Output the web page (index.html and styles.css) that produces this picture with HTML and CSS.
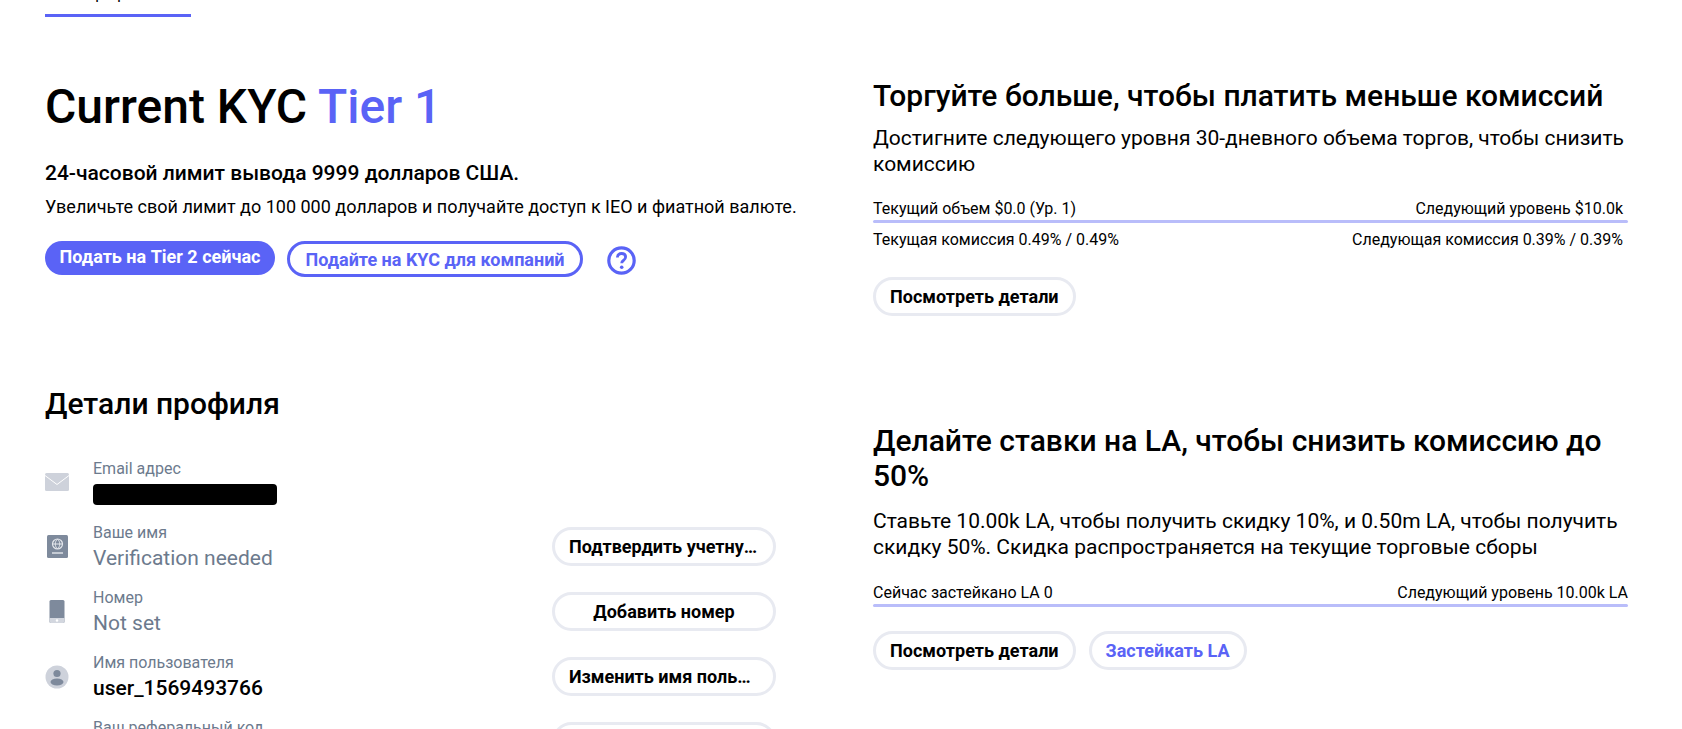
FILE: index.html
```html
<!DOCTYPE html>
<html lang="ru">
<head>
  <meta charset="UTF-8" />
  <title>Профиль</title>
  <meta name="viewport" content="width=device-width, initial-scale=1.0" />
  <link rel="stylesheet" href="styles.css">
</head>
<body>
  <div class="page">
    <div class="tabs"><span class="tab">Профиль</span></div>

    <div class="columns">
      <div class="left">
        <h1>Current KYC <span class="accent">Tier 1</span></h1>
        <p class="limit">24-часовой лимит вывода 9999 долларов США.</p>
        <p class="limit-sub">Увеличьте свой лимит до 100 000 долларов и получайте доступ к IEO и фиатной валюте.</p>
        <div class="kyc-actions">
          <button class="btn-solid">Подать на Tier 2 сейчас</button>
          <button class="btn-outline">Подайте на KYC для компаний</button>
          <svg class="help" viewBox="0 0 29 29" width="29" height="29">
            <circle cx="14.5" cy="14.5" r="12.7" fill="none" stroke="#5a63f6" stroke-width="3.2"/>
            <path d="M10.400 11.600c0-2.500 1.800-4.100 4.200-4.100s4 1.500 4 3.600c0 1.700-1 2.600-2.200 3.400-1.100.8-1.700 1.300-1.700 2.700" fill="none" stroke="#5a63f6" stroke-width="2.800"/>
            <circle cx="14.700" cy="21.200" r="1.800" fill="#5a63f6"/>
          </svg>
        </div>

        <h2 class="profile-title">Детали профиля</h2>

        <div class="row row-email">
          <svg class="icon" viewBox="0 0 24 18" width="24" height="18">
            <rect width="24" height="18" rx="1.500" fill="#ced2db"/>
            <path d="M0 2.500l12 9 12-9" fill="none" stroke="#fff" stroke-width="1"/>
          </svg>
          <div class="info">
            <div class="label">Email адрес</div>
            <div class="redacted"></div>
          </div>
        </div>

        <div class="row">
          <svg class="icon" viewBox="0 0 24 24" width="24" height="24">
            <rect x="2" width="21" height="23" rx="1.500" fill="#7e8a9c"/>
            <circle cx="12.500" cy="9" r="5" fill="none" stroke="#e4e7ec" stroke-width="1.200"/>
            <path d="M7.500 9h10M12.500 4c-3 3-3 7 0 10M12.500 4c3 3 3 7 0 10" fill="none" stroke="#e4e7ec" stroke-width="1"/>
            <path d="M7 18h11" stroke="#e4e7ec" stroke-width="1.400"/>
          </svg>
          <div class="info">
            <div class="label">Ваше имя</div>
            <div class="value muted">Verification needed</div>
          </div>
          <button class="btn-plain row-btn"><span>Подтвердить учетную запись</span></button>
        </div>

        <div class="row">
          <svg class="icon" viewBox="0 0 24 24" width="24" height="24">
            <rect x="4.500" width="15" height="23" rx="1.500" fill="#7e8a9c"/>
            <path d="M4.500 18h15v3.500a1.500 1.500 0 0 1-1.500 1.500H6a1.500 1.500 0 0 1-1.500-1.500z" fill="#d3d7df"/>
            <circle cx="12" cy="20.500" r="1.200" fill="#fff"/>
          </svg>
          <div class="info">
            <div class="label">Номер</div>
            <div class="value muted">Not set</div>
          </div>
          <button class="btn-plain row-btn"><span>Добавить номер</span></button>
        </div>

        <div class="row">
          <svg class="icon" viewBox="0 0 24 24" width="24" height="24">
            <circle cx="12" cy="12" r="11.500" fill="#ced2db"/>
            <circle cx="12" cy="8.500" r="3.600" fill="#7e8a9c"/>
            <ellipse cx="12" cy="17" rx="6.500" ry="3.500" fill="#7e8a9c"/>
          </svg>
          <div class="info">
            <div class="label">Имя пользователя</div>
            <div class="value">user_1569493766</div>
          </div>
          <button class="btn-plain row-btn"><span>Изменить имя пользователя</span></button>
        </div>

        <div class="row">
          <div class="icon"></div>
          <div class="info">
            <div class="label">Ваш реферальный код</div>
            <div class="value"></div>
          </div>
          <button class="btn-plain row-btn"></button>
        </div>
      </div>

      <div class="right">
        <section class="fees">
          <h2>Торгуйте больше, чтобы платить меньше комиссий</h2>
          <p class="desc">Достигните следующего уровня 30-дневного объема торгов, чтобы снизить комиссию</p>
          <div class="bar-labels pad"><span>Текущий объем $0.0 (Ур. 1)</span><span>Следующий уровень $10.0k</span></div>
          <div class="bar"></div>
          <div class="fee-labels pad"><span>Текущая комиссия 0.49% / 0.49%</span><span>Следующая комиссия 0.39% / 0.39%</span></div>
          <div class="actions"><button class="btn-plain">Посмотреть детали</button></div>
        </section>

        <section class="stake">
          <h2>Делайте ставки на LA, чтобы снизить комиссию до 50%</h2>
          <p class="desc">Ставьте 10.00k LA, чтобы получить скидку 10%, и 0.50m LA, чтобы получить скидку 50%. Скидка распространяется на текущие торговые сборы</p>
          <div class="bar-labels"><span>Сейчас застейкано LA 0</span><span>Следующий уровень 10.00k LA</span></div>
          <div class="bar"></div>
          <div class="actions">
            <button class="btn-plain">Посмотреть детали</button>
            <button class="btn-plain accent">Застейкать LA</button>
          </div>
        </section>
      </div>
    </div>
  </div>
</body>
</html>
```

FILE: styles.css
```css
html, body {
  margin: 0;
  height: 729px;
  overflow: hidden;
  background-color: #fff;
}

body {
  font-family: Roboto, sans-serif;
  color: #000;
}

.page {
  padding: 0 54px 0 45px;
}

h1, h2, p {
  margin: 0;
  font-weight: 500;
}

button {
  font-family: Roboto, sans-serif;
  font-weight: 700;
  font-size: 18px;
  border-radius: 20px;
  background: #fff;
  cursor: pointer;
  box-sizing: border-box;
}

.accent { color: #5a63f6; }

.tabs {
  height: 17px;
  overflow: hidden;
}

.tab {
  display: block;
  width: 146px;
  height: 23px;
  box-sizing: border-box;
  border-bottom: 3px solid #5a63f6;
  margin-top: -6px;
  text-align: center;
  font-size: 16px;
  line-height: 0;
}

.columns {
  display: grid;
  grid-template-columns: 731px 755px;
  column-gap: 97px;
}

/* left column */
.left h1 {
  margin-top: 62px;
  font-size: 48px;
  line-height: 56px;
}

.limit {
  margin-top: 26px;
  font-size: 21px;
  line-height: 24px;
}

.limit-sub {
  margin-top: 10px;
  font-size: 18px;
  line-height: 24px;
  font-weight: 400;
  white-space: nowrap;
}

.kyc-actions {
  display: flex;
  align-items: flex-start;
  margin-top: 22px;
}

.btn-solid {
  width: 230px;
  height: 34px;
  padding: 0 0 3px;
  border: none;
  background-color: #5a63f6;
  color: #fff;
}

.btn-outline {
  width: 296px;
  height: 36px;
  margin-left: 12px;
  padding: 0;
  border: 3px solid #5a63f6;
  color: #5a63f6;
}

.help {
  margin: 5px 0 0 24px;
}

.profile-title {
  margin-top: 109px;
  font-size: 30px;
  line-height: 36px;
}

.row {
  display: flex;
  align-items: center;
  height: 65px;
}

.row-email {
  margin-top: 27px;
}

.icon {
  width: 24px;
  flex: none;
}

.info {
  flex: 1;
  margin-left: 24px;
}

.label {
  font-size: 16px;
  line-height: 20px;
  color: #6c7a8d;
}

.value {
  min-height: 24px;
  margin-top: 3px;
  font-size: 21px;
  line-height: 24px;
  font-weight: 500;
}

.value.muted {
  font-weight: 400;
  color: #6c7a8d;
}

.redacted {
  width: 184px;
  height: 21px;
  margin-top: 5px;
  border-radius: 4px;
  background-color: #000;
}

.btn-plain {
  height: 39px;
  padding: 0 14px;
  border: 3px solid #e8eaf1;
  color: #000;
}

.btn-plain.accent { color: #5a63f6; }

.row-btn {
  width: 224px;
  flex: none;
}

.row-btn span {
  display: block;
  white-space: nowrap;
  overflow: hidden;
  text-overflow: ellipsis;
}

/* right column */
.right h2 {
  font-size: 30px;
  line-height: 35px;
}

.fees {
  padding-top: 61px;
}

.stake {
  padding-top: 107px;
}

.desc {
  margin-top: 12px;
  font-size: 21px;
  line-height: 26px;
  font-weight: 400;
}

.stake .desc { margin-top: 15px; }

.bar-labels, .fee-labels {
  display: flex;
  justify-content: space-between;
  font-size: 16px;
  line-height: 20px;
}

.bar-labels { margin-top: 22px; }
.fee-labels { margin-top: 7px; }
.stake .bar-labels { margin-top: 23px; }

.pad { padding-right: 5px; }

.bar {
  height: 3px;
  margin-top: 1px;
  border-radius: 2px;
  background-color: #b9bdfa;
}

.actions {
  display: flex;
  gap: 13px;
  margin-top: 27px;
}

.stake .actions { margin-top: 24px; }
```
